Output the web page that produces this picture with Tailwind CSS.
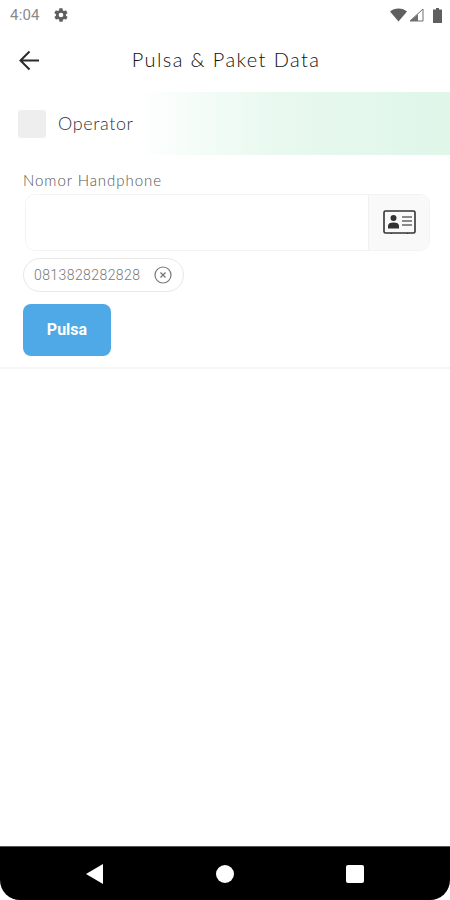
<!DOCTYPE html>
<html lang="id">
<head>
    <meta charset="UTF-8">
    <meta name="viewport" content="width=device-width, initial-scale=1.0">
    <title>Pulsa & Paket Data</title>
    <script src="https://cdn.jsdelivr.net/npm/@tailwindcss/browser@4"></script>
</head>
<body class="bg-white font-['Lato',sans-serif]">
    <div class="flex flex-col w-[450px] h-[900px] overflow-hidden">
        <!-- Status bar -->
        <div class="flex items-center justify-between h-[30px] pl-[10px] pr-[8px] shrink-0">
            <div class="flex items-center gap-[13px]">
                <span class="font-['Roboto',sans-serif] text-[15px] tracking-[0.200px] text-[#8a8a8a]">4:04</span>
                <svg class="w-[16px] h-[16px]" viewBox="0 0 24 24" fill="#5f5f5f"><path d="M19.4 13c.1-.3.1-.7.1-1s0-.7-.1-1l2.1-1.600c.2-.2.2-.4.1-.6l-2-3.500c-.1-.2-.4-.3-.6-.2l-2.500 1c-.5-.4-1.100-.7-1.700-1l-.4-2.600c0-.3-.2-.5-.5-.5h-4c-.3 0-.5.2-.5.400l-.4 2.700c-.6.2-1.200.6-1.700 1l-2.500-1c-.2-.1-.5 0-.6.200l-2 3.500c-.1.2-.1.500.1.600L4.500 11c0 .3-.1.700-.1 1s0 .7.1 1l-2.100 1.600c-.2.2-.2.400-.1.600l2 3.500c.1.200.4.300.6.200l2.500-1c.5.400 1.100.700 1.700 1l.4 2.600c0 .3.2.500.5.500h4c.3 0 .5-.2.5-.4l.4-2.700c.6-.2 1.200-.6 1.700-1l2.500 1c.2.100.5 0 .6-.2l2-3.500c.1-.2.1-.5-.1-.6L19.400 13zM12 15.500a3.500 3.500 0 1 1 0-7 3.500 3.500 0 0 1 0 7z"/></svg>
            </div>
            <div class="flex items-center gap-[2px]">
                <svg class="w-[17px] h-[14px]" viewBox="0 0 17 14" fill="#5f5f5f"><path d="M0 3.500C2.300 1.400 5.200.5 8.500.5s6.200.9 8.500 3l-8.500 10z"/></svg>
                <svg class="w-[15px] h-[14px]" viewBox="0 0 15 14"><path d="M14 1v12H1z" fill="none" stroke="#6f6f6f" stroke-width="1"/><path d="M9 6v7H1z" fill="#6f6f6f"/></svg>
                <svg class="w-[9px] h-[15px] ml-[7px]" viewBox="0 0 9 15" fill="#5f5f5f"><path d="M3 0h3v1.500h3V15H0V1.500h3z"/></svg>
            </div>
        </div>

        <!-- App bar -->
        <div class="relative flex items-center justify-center h-[62px] shrink-0">
            <svg class="absolute left-[19px] top-[20px] w-[21px] h-[21px]" viewBox="0 0 21 21" fill="none" stroke="#2b2b2b" stroke-width="2"><path d="M20 10.500H2M10.500 1.500l-9 9 9 9"/></svg>
            <h1 class="mb-[4px] ml-[2px] text-[20px] font-light text-[#111111] tracking-[1.400px]">Pulsa &amp; Paket Data</h1>
        </div>

        <!-- Operator -->
        <div class="flex items-center gap-[12px] h-[63px] pl-[18px] shrink-0 bg-gradient-to-r from-white from-[30%] via-[#e9f9f0] via-[60%] to-[#dff6e9]">
            <div class="w-[28px] h-[28px] rounded-[3px] bg-[#eeeeee]"></div>
            <span class="text-[18px] font-light text-[#333333] tracking-[0.600px]">Operator</span>
        </div>

        <!-- Form nomor -->
        <div class="flex flex-col px-[23px] pt-[15px] pb-[11px] border-b-2 border-[#f6f6f6]">
            <label class="text-[15px] leading-[20px] font-light text-[#555555] tracking-[0.950px]">Nomor Handphone</label>
            <div class="flex ml-[2px] mr-[-3px] h-[57px] mt-[4px] rounded-[10px] border border-[#f3f3f3] overflow-hidden">
                <input type="text" class="flex-1 min-w-0 bg-white outline-none">
                <div class="flex items-center justify-center w-[61px] bg-[#f9f9f9] border-l border-[#f1f1f1]">
                    <svg class="w-[33px] h-[25px]" viewBox="0 0 33 25" fill="none">
                        <rect x="1" y="1" width="31" height="22" rx="1.500" stroke="#333" stroke-width="1.600"/>
                        <circle cx="10.500" cy="8" r="3" fill="#333"/>
                        <path d="M5 18.500v-2.500c0-2.500 2-3.500 5.500-3.500s5.500 1 5.500 3.500v2.500z" fill="#333"/>
                        <path d="M19 7h10M19 11h10M19 15h10" stroke="#666" stroke-width="1.500"/>
                        <path d="M8.500 23v1M24.500 23v1" stroke="#333" stroke-width="1.400"/>
                    </svg>
                </div>
            </div>
            <div class="flex items-center self-start w-[161px] h-[34px] mt-[7px] pl-[10px] rounded-full border border-[#e8e8e8]">
                <span class="font-['Roboto',sans-serif] font-light text-[14px] text-[#777777] tracking-[0.420px]">0813828282828</span>
                <svg class="w-[18px] h-[18px] ml-[14px]" viewBox="0 0 18 18" fill="none" stroke="#777777"><circle cx="9" cy="9" r="8" stroke-width="1.200"/><path d="M6.500 6.500l5 5M11.500 6.500l-5 5" stroke-width="1.300"/></svg>
            </div>
            <button class="w-[88px] h-[52px] mt-[12px] rounded-[8px] bg-[#4fa9e6] text-white font-['Roboto',sans-serif] font-bold text-[16px]">Pulsa</button>
        </div>

        <div class="flex-1"></div>

        <!-- Navigasi Android -->
        <div class="flex items-center h-[54px] shrink-0 bg-black rounded-b-[20px] border-t border-[#555]">
            <div class="relative w-full h-full">
                <svg class="absolute left-[86px] top-[17px] w-[17px] h-[20px]" viewBox="0 0 17 20" fill="white"><path d="M17 0v20L0 10z"/></svg>
                <div class="absolute left-[216px] top-[18px] w-[18px] h-[18px] rounded-full bg-white"></div>
                <div class="absolute left-[346px] top-[18px] w-[18px] h-[18px] rounded-[2px] bg-white"></div>
            </div>
        </div>
    </div>
</body>
</html>
